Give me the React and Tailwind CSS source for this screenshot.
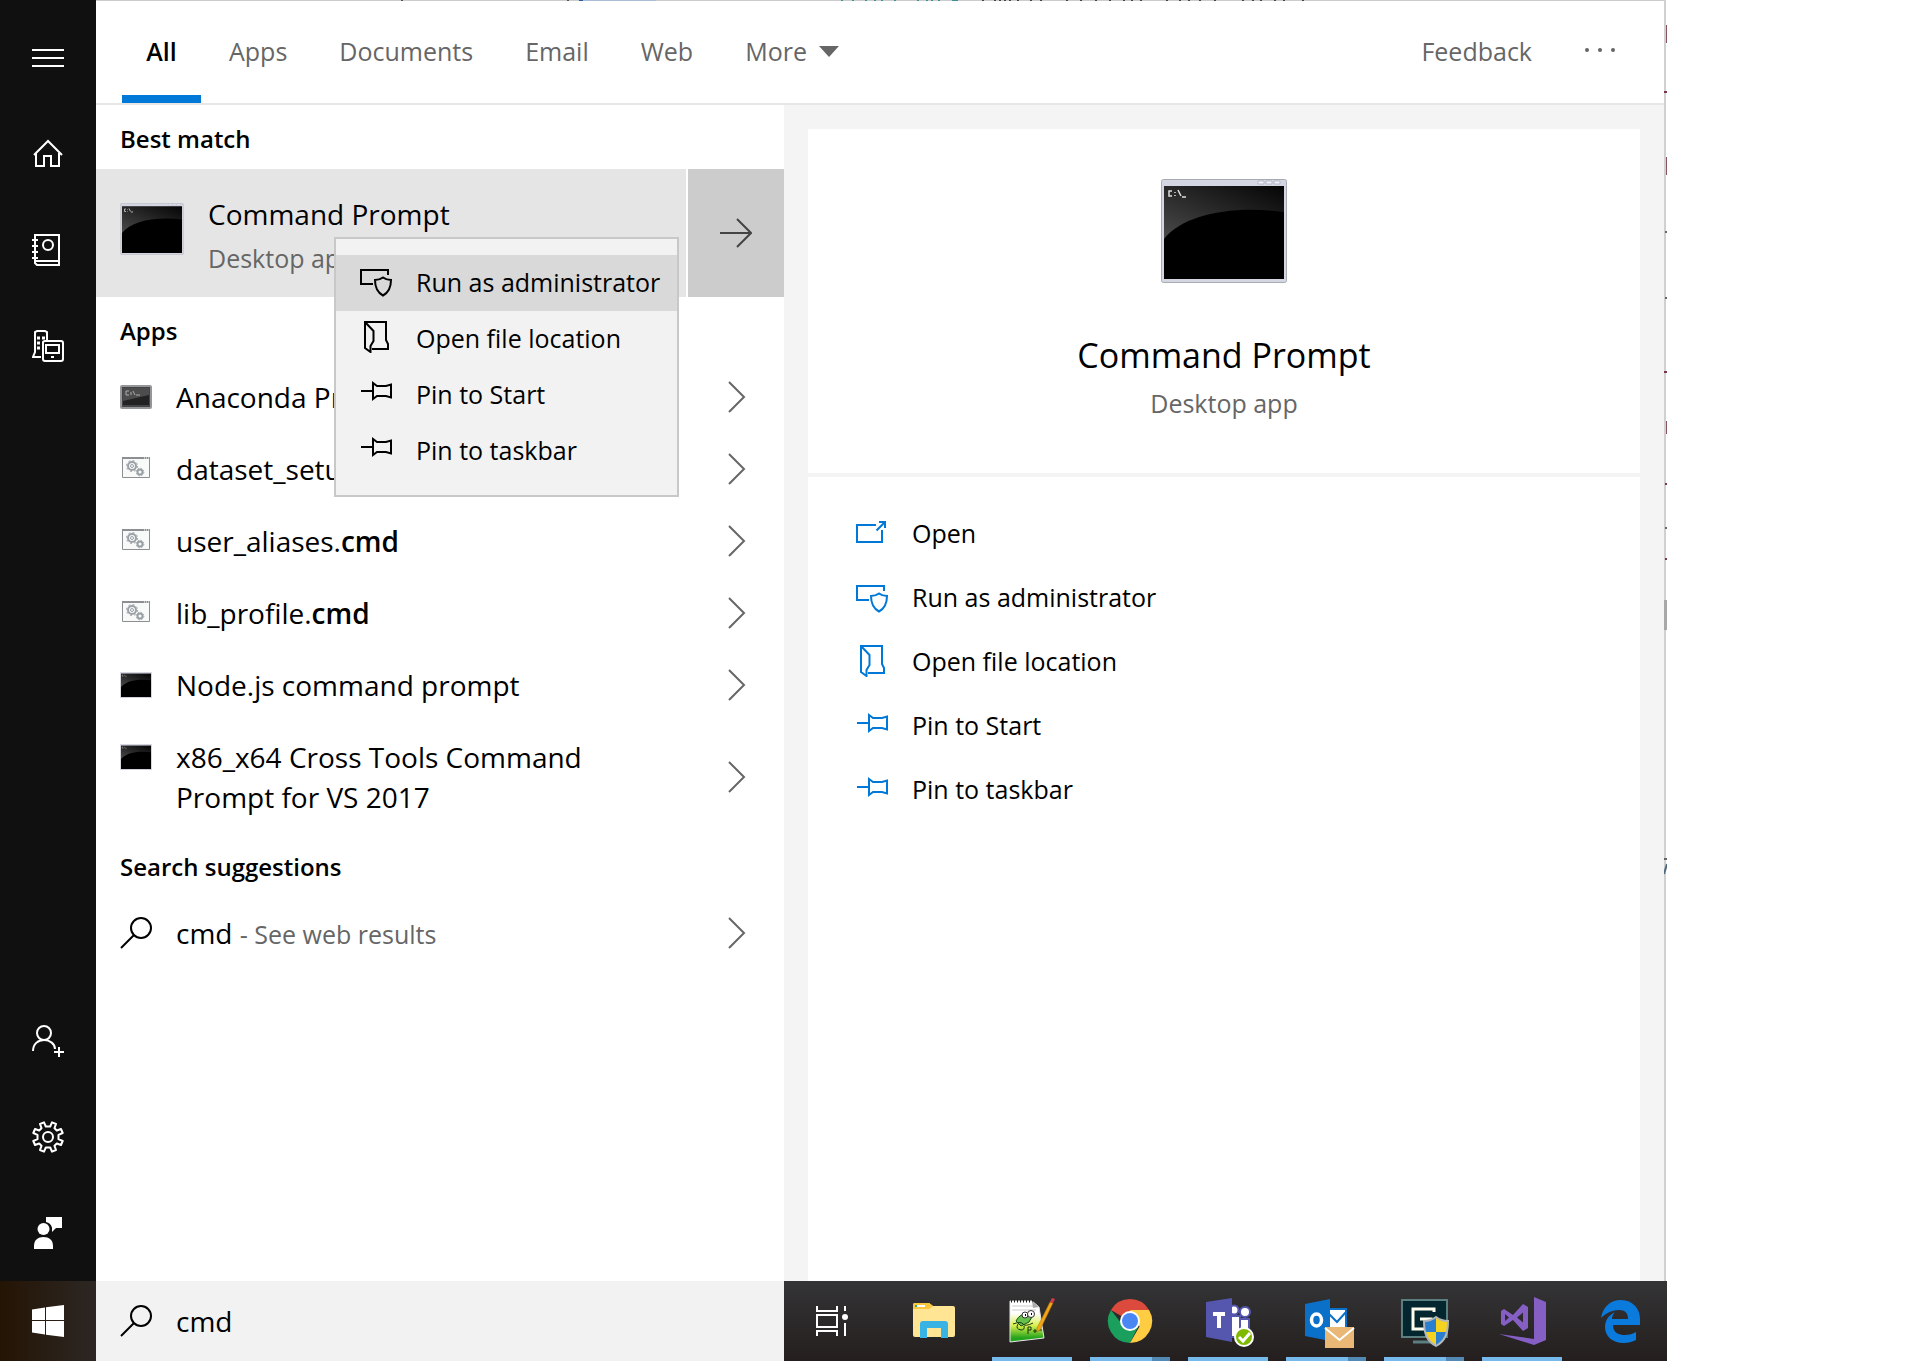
const tabs = ["All", "Apps", "Documents", "Email", "Web"];

const apps = [
  { name: "Anaconda Prompt", icon: "console" },
  { name: "dataset_setup", bold: ".cmd", icon: "script" },
  { name: "user_aliases.", bold: "cmd", icon: "script" },
  { name: "lib_profile.", bold: "cmd", icon: "script" },
  { name: "Node.js command prompt", icon: "prompt" },
  { name: "x86_x64 Cross Tools Command Prompt for VS 2017", icon: "prompt" },
];

const actions = [
  { label: "Open", icon: OpenIcon },
  { label: "Run as administrator", icon: AdminIcon },
  { label: "Open file location", icon: FolderIcon },
  { label: "Pin to Start", icon: PinIcon },
  { label: "Pin to taskbar", icon: PinIcon },
];

/* ── Line icons ── */

function LineIcon({ children, className = "" }) {
  return (
    <svg
      viewBox="0 0 32 32"
      className={`w-8 h-8 shrink-0 ${className}`}
      fill="none"
      stroke="currentColor"
      strokeWidth="2"
      aria-hidden="true"
    >
      {children}
    </svg>
  );
}

function OpenIcon(props) {
  return (
    <LineIcon {...props}>
      <path d="M20 8H1v17h25V13" />
      <path d="M20.500 13.500 29 5M23 5h6v6" />
    </LineIcon>
  );
}

function AdminIcon(props) {
  return (
    <LineIcon {...props}>
      <path d="M13 19H1V5h27v5" />
      <path d="M23 12.500c2.500 1.800 5 2.500 8 2.500 0 7-1.500 12-8 15.500C16.500 27 15 22 15 15c3 0 5.500-.7 8-2.500z" />
    </LineIcon>
  );
}

function FolderIcon(props) {
  return (
    <LineIcon {...props}>
      <path d="M5 1h21v18l2 4v5H12" />
      <path d="M5 1v26l5.500 4v-6l3-5V10z" />
    </LineIcon>
  );
}

function PinIcon(props) {
  return (
    <LineIcon {...props}>
      <path d="M1 14h12M13 6v16l4-3h9l5 1.500v-13L26 9h-9z" />
    </LineIcon>
  );
}

function SearchIcon() {
  return (
    <LineIcon>
      <circle cx="21" cy="11" r="10" />
      <path d="M14 18 1 31" />
    </LineIcon>
  );
}

function MenuIcon() {
  return (
    <LineIcon>
      <path d="M0 8h32M0 16h32M0 24h32" />
    </LineIcon>
  );
}

function HomeIcon() {
  return (
    <LineIcon>
      <path d="M2 17 16 3l14 14M4 15v13h8V18h7v10h8V15" />
    </LineIcon>
  );
}

function NotebookIcon() {
  return (
    <LineIcon>
      <path d="M3 1h24v30H5l-2-2zM3 27h24M0 6h6M0 12h6M0 18h6M0 24h6" />
      <circle cx="16" cy="11" r="5" />
    </LineIcon>
  );
}

function DevicesIcon() {
  return (
    <LineIcon>
      <path d="M9 27H1l2-5V2l2-1h8l2 1v8" />
      <path d="M5 8h3M10 8h3M5 13h3M10 13h2M5 18h3" strokeWidth="3" />
      <rect x="11" y="11" width="20" height="20" rx="2" />
      <path d="M14 15h13v8H14z" />
      <path d="M19 27h3" />
    </LineIcon>
  );
}

function AddUserIcon() {
  return (
    <LineIcon>
      <circle cx="12" cy="8" r="7" />
      <path d="M1 26c0-7 5-11 11-11s11 4 11 9M27 22v10M22 27h10" />
    </LineIcon>
  );
}

function GearIcon() {
  return (
    <LineIcon>
      <circle cx="16" cy="16" r="5" />
      <path
        strokeLinejoin="round"
        d="M13.800 5.500 12 1.300 8 3l1.500 4.200-2.300 2.300L3 8l-1.700 4 4.200 1.800v4.400L1.300 20 3 24l4.200-1.500 2.300 2.300L8 29l4 1.700 1.800-4.200h4.400l1.800 4.200 4-1.700-1.500-4.200 2.300-2.300L29 24l1.700-4-4.200-1.800v-4.400L30.700 12 29 8l-4.200 1.500-2.300-2.300L24 3l-4-1.700-1.800 4.200z"
      />
    </LineIcon>
  );
}

function FeedbackIcon() {
  return (
    <svg viewBox="0 0 32 32" className="w-8 h-8" fill="#fff" aria-hidden="true">
      <path d="M14 0h16v11h-6l-4 4v-4.500a8 8 0 0 0-6-5.500z" />
      <circle cx="11.500" cy="12" r="6" />
      <path d="M2 32v-3c0-6 4-9 9.500-9s9.500 3 9.500 9v3z" />
    </svg>
  );
}

function Chevron() {
  return (
    <svg viewBox="0 0 18 32" className="w-[18px] h-8" fill="none" stroke="#666" strokeWidth="2" aria-hidden="true">
      <path d="m1 1 15 15L1 31" />
    </svg>
  );
}

/* ── App icons ── */

function PromptIcon({ className }) {
  return (
    <svg viewBox="0 0 126 104" className={className} aria-hidden="true">
      <defs>
        <linearGradient id="gloss" x1="0" y1="1" x2="1" y2="0">
          <stop offset="0" stopColor="#4a4a4a" />
          <stop offset="1" stopColor="#050505" />
        </linearGradient>
      </defs>
      <rect x="0.500" y="0.500" width="125" height="103" rx="2" fill="#d4d6e2" stroke="#a9abb3" />
      <path d="M97 2h6v3h-6zM105 2h6v3h-6zM113 2h6v3h-6z" fill="#f3f4fa" stroke="#b4b7c6" />
      <path d="M3 7h120v93H3z" fill="#000" />
      <path d="M3 7h120v26C70 26 22 36 3 60z" fill="url(#gloss)" />
      <path
        d="M11 12H8v5h3M14 13v1M14 16v1M17 11l3 6M21 18h4"
        fill="none"
        stroke="#ddd"
        strokeWidth="1.500"
      />
    </svg>
  );
}

function ConsoleIcon() {
  return (
    <svg viewBox="0 0 32 26" className="w-8 h-[26px]" aria-hidden="true">
      <rect x="1" y="2" width="30" height="22" rx="1" fill="#444" stroke="#94979a" strokeWidth="2" />
      <path d="M3 4h26v17H3z" fill="#222" />
      <path d="M3 4h26v7L3 17z" fill="#4c4c4c" />
      <path d="M9 7H6v4h3M11 8v3M13 7l2 4M16 11h4" fill="none" stroke="#aaa" />
    </svg>
  );
}

function ScriptIcon() {
  return (
    <svg viewBox="0 2 32 26" className="w-8 h-[26px]" aria-hidden="true">
      <path d="M2.500 3.500h27v20h-27z" fill="#f8fafa" stroke="#8c8f91" />
      <path d="M2 4h28" stroke="#8c8f91" strokeWidth="2" />
      <path d="M24 4h1M26 4h1M28 4h1" stroke="#fff" />
      <g fill="none" stroke="#9ba1a5">
        <circle cx="12" cy="12" r="4" strokeWidth="2" />
        <circle cx="12" cy="12" r="5.500" strokeDasharray="2 2.300" />
        <circle cx="12" cy="12" r="1.500" />
        <circle cx="20" cy="18" r="2.500" strokeWidth="2" />
        <circle cx="20" cy="18" r="3.800" strokeDasharray="1.500 1.500" />
      </g>
    </svg>
  );
}

function AppIcon({ type }) {
  if (type === "console") return <ConsoleIcon />;
  if (type === "script") return <ScriptIcon />;
  return <PromptIcon className="w-8 h-[26px]" />;
}

/* ── Taskbar icons ── */

function TaskViewIcon() {
  return (
    <svg viewBox="0 0 48 48" className="w-12 h-12" fill="none" stroke="#fff" strokeWidth="2" aria-hidden="true">
      <path d="M5 9v5h20V9M5 18h20v12H5zM5 39v-5h20v5M33 9v5M33 26v13" />
      <circle cx="33" cy="20" r="3" fill="#fff" stroke="none" />
    </svg>
  );
}

function ExplorerIcon() {
  return (
    <svg viewBox="0 0 48 48" className="w-12 h-12" aria-hidden="true">
      <path d="M3 8q0-2 2-2h14l4 3h20q2 0 2 2v27q0 2-2 2H5q-2 0-2-2z" fill="#ffe594" />
      <path d="M3 8q0-2 2-2h14l4 3-4 3H3z" fill="#fcc63c" />
      <path d="M7 8h8v2H7z" fill="#fff" />
      <path d="M5 8h2v2H5z" fill="#2fae8e" />
      <path d="M10 41V27q0-3 3-3h22q3 0 3 3v14h-7V31H17v10z" fill="#38b3e4" />
    </svg>
  );
}

function NotepadIcon() {
  return (
    <svg viewBox="0 0 48 48" className="w-12 h-12" aria-hidden="true">
      <defs>
        <linearGradient id="paper" x1="0" y1="0" x2="0" y2="1">
          <stop offset="0.300" stopColor="#fff" />
          <stop offset="0.600" stopColor="#d8f04c" />
          <stop offset="0.900" stopColor="#24a31c" />
        </linearGradient>
      </defs>
      <path d="M2 4h22l7 6 5 31-34 4z" fill="url(#paper)" stroke="#e8e8e8" />
      <path d="M3 4h22" stroke="#222" strokeWidth="3" strokeDasharray="1 2" />
      <path d="M4 9h22M4 13h24" stroke="#ccc" />
      <path d="m24 4 1 7 6-1z" fill="#aaa" />
      <path d="M8 24q4-8 12-7l4 3-3 5-8 4z" fill="#66c04c" stroke="#1c4a14" />
      <circle cx="17" cy="18" r="3" fill="#fff" stroke="#333" />
      <circle cx="23" cy="17" r="3.500" fill="#fff" stroke="#333" />
      <path d="M17 18h1M23 17h1" stroke="#000" strokeWidth="2" />
      <path d="M5 27q8-3 10 0t10-1M10 27q-3 5 3 6 4 0 3-4M20 37v-7h3v3h-3M25 34h4M27 32v4M30 33h4" fill="none" stroke="#17370f" />
      <path d="m42 5 3 1-13 27-3 2v-4z" fill="#f2a516" stroke="#a66a10" strokeWidth="0.500" />
      <path d="m42 5 3 1 2-4-3-1z" fill="#d33a4a" />
    </svg>
  );
}

function ChromeIcon() {
  return (
    <svg viewBox="0 0 48 48" className="w-12 h-12" aria-hidden="true">
      <path d="M24 24 4.900 13a22 22 0 0 1 38.200 0z" fill="#dc4a3e" />
      <path d="M24 24H13.600L4.900 13A22 22 0 0 0 24 46l8-16z" fill="#1a9f5c" />
      <path d="M24 13h19.100A22 22 0 0 1 24 46l9.500-16.500z" fill="#ffcd42" />
      <circle cx="24" cy="24" r="10" fill="#fff" />
      <circle cx="24" cy="24" r="8" fill="#4a87f3" />
    </svg>
  );
}

function TeamsIcon() {
  return (
    <svg viewBox="0 0 48 48" className="w-12 h-12 overflow-visible" aria-hidden="true">
      <g fill="#fff" stroke="#5557ae" strokeWidth="2">
        <path d="M34 22h11v12q-2 6-9 6h-2z" />
        <path d="M26 19h10v15q0 6-5 6h-5z" />
        <circle cx="30" cy="13" r="4.500" />
        <circle cx="41" cy="15" r="5" />
      </g>
      <path d="M2 5 28 1v44L2 40z" fill="#5557ae" />
      <path d="M9 17h12M15 17v14" stroke="#fff" strokeWidth="4" />
      <circle cx="40" cy="40" r="9" fill="#7fba00" stroke="#fff" strokeWidth="2" />
      <path d="m35 40 4 4 7-8" fill="none" stroke="#fff" strokeWidth="3" />
    </svg>
  );
}

function OutlookIcon() {
  return (
    <svg viewBox="-2 -2 52 52" className="w-[52px] h-[52px] overflow-visible" aria-hidden="true">
      <path d="M26 12h18v19H26z" fill="#fff" stroke="#0a70c8" strokeWidth="2" />
      <path d="m27 17 8 8 9-10" fill="none" stroke="#0a70c8" strokeWidth="2" />
      <path d="m3 7 25-5v42L3 39z" fill="#0a70c8" />
      <ellipse cx="14.500" cy="23" rx="5" ry="6" fill="none" stroke="#fff" strokeWidth="3.500" />
      <path d="M23 30h29v21H23z" fill="#e9b877" />
      <path d="m23 31 14.500 12L52 31" fill="none" stroke="#fff" strokeWidth="2" />
    </svg>
  );
}

function ConnectIcon() {
  return (
    <svg viewBox="0 -2 50 50" className="w-[50px] h-[50px] overflow-visible" aria-hidden="true">
      <path d="M3 2h45v37H3z" fill="#03262f" stroke="#5b7f80" strokeWidth="2" />
      <path d="M14 44h22" stroke="#5b7f80" strokeWidth="3" />
      <path d="M35 14V11H14v20h18V21H21" fill="none" stroke="#fffdf0" strokeWidth="3" />
      <path d="M37 19c4 3 8 4 12 4 0 13-3 20-12 25-9-5-12-12-12-25 4 0 8-1 12-4z" fill="#f4d21f" />
      <path d="M37 19v15H26c-1-4-1-8-1-11 4 0 8-1 12-4zM37 34h11c-2 6-5 10-11 14z" fill="#2a7fd0" />
      <path
        d="M37 19c4 3 8 4 12 4 0 13-3 20-12 25-9-5-12-12-12-25 4 0 8-1 12-4z"
        fill="none"
        stroke="#b4b7ba"
        strokeWidth="2"
      />
    </svg>
  );
}

function StudioIcon() {
  return (
    <svg viewBox="0 0 48 48" className="w-12 h-12" fill="#865fc5" aria-hidden="true">
      <path d="m36 0 12 5v38l-12 5L1 37l35 5z" />
      <path fillRule="evenodd" d="M3 14 6 12l9 6L25 7l5 3v21l-5 3-10-11-9 6-3-2zM7 17v7l4-3.500zM19 20.500l6 5v-10z" />
    </svg>
  );
}

function EdgeIcon() {
  return (
    <svg viewBox="0 0 48 48" className="w-12 h-12" aria-hidden="true">
      <path
        d="M5 21C7 10 14 3 25 3c12 0 19 9 19 19v6H17c0 8 6 10 12 10 4 0 8-1 11-3v8c-4 2-8 3-12 3C16 46 9 39 9 30c0-7 4-12 10-15-2 2-3 4-3 7h16c0-6-3-9-9-9-8 0-14 4-18 8z"
        fill="#0a7bdc"
      />
    </svg>
  );
}

function WindowsIcon() {
  return (
    <svg viewBox="0 0 32 32" className="w-8 h-8" fill="#fff" aria-hidden="true">
      <path d="m0 4.500 13-2V15H0zM14 2.300 32 0v15H14zM0 16h13v13.500l-13-2zM14 16h18v16l-18-2.300z" />
    </svg>
  );
}

const taskbar = [
  { name: "Task View", icon: TaskViewIcon },
  { name: "File Explorer", icon: ExplorerIcon },
  { name: "Notepad++", icon: NotepadIcon, open: "one" },
  { name: "Chrome", icon: ChromeIcon, open: "many" },
  { name: "Teams", icon: TeamsIcon, open: "one" },
  { name: "Outlook", icon: OutlookIcon, open: "many" },
  { name: "Remote Console", icon: ConnectIcon, open: "many" },
  { name: "Visual Studio", icon: StudioIcon, open: "one" },
  { name: "Edge", icon: EdgeIcon },
];

/* ── Slivers of the window behind, seen along the top and right edges ── */

function BackdropTop() {
  return (
    <svg className="absolute top-0 left-0 w-full h-px" aria-hidden="true">
      <path d="M401 .5h2M567 .5h2" stroke="#555" />
      <path d="M579 .5h4" stroke="#2d5c94" />
      <path d="M583 .5h73" stroke="#a9bdd6" />
      <path
        d="M841 .5h2M852 .5h2M865 .5h2M874 .5h2M881 .5h2M894 .5h2M917 .5h2M926 .5h2M931 .5h2M938 .5h2M952 .5h6"
        stroke="#3f8f96"
      />
      <path
        d="M982 .5h2M994 .5h2M999 .5h2M1004 .5h2M1009 .5h2M1017 .5h2M1030 .5h2M1040 .5h2M1066 .5h2M1080 .5h2M1095 .5h2M1109 .5h2M1123 .5h2M1131 .5h2M1140 .5h2M1166 .5h2M1179 .5h2M1188 .5h2M1199 .5h2M1214 .5h2M1242 .5h2M1252 .5h2M1260 .5h2M1274 .5h2M1283 .5h2M1302 .5h2"
        stroke="#444"
      />
    </svg>
  );
}

function BackdropRight() {
  return (
    <svg className="absolute top-0 right-0 w-[3px] h-[930px]" aria-hidden="true">
      <path d="M2.500 25v18M2.500 157v18M2.500 421v13" stroke="#8a5560" />
      <path d="M0 92h3M0 372h3M1 484h2M1 559h2" stroke="#7a3548" strokeWidth="2" />
      <path d="M1 232h2M1 298h2M1 528h2M0 859h3" stroke="#666" strokeWidth="2" />
      <path d="M1.500 600v30" stroke="#a8a8a8" strokeWidth="3" />
      <path d="m0 874 3-10" stroke="#4d6a80" strokeWidth="2" />
    </svg>
  );
}

/* ── Sections ── */

function RailButton({ label, children }) {
  return (
    <button aria-label={label} className="w-24 h-24 flex items-center justify-center text-white">
      {children}
    </button>
  );
}

function Rail() {
  return (
    <nav className="w-24 shrink-0 flex flex-col justify-between bg-[#101010] pt-2.5">
      <div>
        <RailButton label="Menu"><MenuIcon /></RailButton>
        <RailButton label="Home"><HomeIcon /></RailButton>
        <RailButton label="Notebook"><NotebookIcon /></RailButton>
        <RailButton label="Devices"><DevicesIcon /></RailButton>
      </div>
      <div>
        <RailButton label="Add account"><AddUserIcon /></RailButton>
        <RailButton label="Settings"><GearIcon /></RailButton>
        <RailButton label="Feedback"><FeedbackIcon /></RailButton>
      </div>
    </nav>
  );
}

function Header() {
  return (
    <header className="h-[105px] flex border-t border-t-[#ccc] border-b-2 border-b-[#e6e6e6] pl-[26px] pr-12 text-[25px] text-[#666]">
      {tabs.map((tab, i) => (
        <button
          key={tab}
          className={
            i === 0
              ? "w-[79px] mr-0.5 border-b-8 border-[#0078d7] pt-2 font-semibold text-black"
              : "px-[26px]"
          }
        >
          {tab}
        </button>
      ))}
      <button className="px-[26px] flex items-center gap-3">
        More
        <svg viewBox="0 0 20 12" className="w-5 h-3" fill="#666" aria-hidden="true">
          <path d="M0 0h20L10 11z" />
        </svg>
      </button>
      <div className="ml-auto flex items-center gap-[52px]">
        <button>Feedback</button>
        <button aria-label="Options" className="pb-1">
          <svg viewBox="0 0 32 6" className="w-8 h-1.5" fill="#666" aria-hidden="true">
            <circle cx="3" cy="3" r="2" />
            <circle cx="16" cy="3" r="2" />
            <circle cx="29" cy="3" r="2" />
          </svg>
        </button>
      </div>
    </header>
  );
}

function SectionTitle({ children }) {
  return <h2 className="h-16 flex items-center pl-6 pt-1 text-2xl font-semibold">{children}</h2>;
}

function ContextMenu() {
  return (
    <div className="absolute left-[238px] top-[68px] z-10 w-[345px] border-2 border-[#c8c8c8] bg-[#f2f2f2] py-4">
      {actions.slice(1).map(({ label, icon: Icon }, i) => (
        <button
          key={label}
          className={`w-full h-14 flex items-center gap-6 pl-6 text-[25px] ${i === 0 ? "bg-[#d9d9d9]" : ""}`}
        >
          <Icon className="mb-1" />
          {label}
        </button>
      ))}
    </div>
  );
}

function Results() {
  return (
    <section className="w-[688px] shrink-0 bg-white">
      <SectionTitle>Best match</SectionTitle>
      <div className="relative h-32 flex gap-0.5">
        <button className="flex-1 flex items-center gap-6 bg-[#e5e5e5] pl-6 text-left">
          <PromptIcon className="w-16 h-[52px] mb-2" />
          <span className="pt-1.5">
            <span className="block text-[28px] leading-11">Command Prompt</span>
            <span className="block text-[25px] leading-11 text-[#666]">Desktop app</span>
          </span>
        </button>
        <button aria-label="Show details" className="w-24 flex items-center justify-center bg-[#ccc]">
          <svg viewBox="0 0 32 32" className="w-8 h-8" fill="none" stroke="#444" strokeWidth="2" aria-hidden="true">
            <path d="M0 16h31M17 2l14 14-14 14" />
          </svg>
        </button>
        <ContextMenu />
      </div>

      <SectionTitle>Apps</SectionTitle>
      {apps.map((app) => (
        <button key={app.name} className="w-full flex items-center justify-between pl-6 pr-[38px] text-left">
          <span className="flex gap-6 py-4">
            <span className="h-10 flex items-center">
              <AppIcon type={app.icon} />
            </span>
            <span className="w-[440px] text-[28px] leading-10">
              {app.name}
              {app.bold && <b className="font-semibold">{app.bold}</b>}
            </span>
          </span>
          <Chevron />
        </button>
      ))}

      <SectionTitle>Search suggestions</SectionTitle>
      <button className="w-full h-18 flex items-center gap-6 pl-6 pr-[38px] text-left">
        <SearchIcon />
        <span className="flex-1 text-[28px]">
          cmd <span className="text-[25px] text-[#666]">- See web results</span>
        </span>
        <Chevron />
      </button>
    </section>
  );
}

function Details() {
  return (
    <section className="flex-1 flex flex-col gap-1 bg-[#f4f4f4] px-6 pt-6">
      <div className="h-[344px] flex flex-col items-center bg-white pt-[50px]">
        <PromptIcon className="w-[126px] h-[104px]" />
        <h1 className="mt-12 text-[34px] leading-12">Command Prompt</h1>
        <p className="text-[25px] leading-12 text-[#666]">Desktop app</p>
      </div>
      <div className="flex-1 bg-white pt-[25px]">
        {actions.map(({ label, icon: Icon }) => (
          <button key={label} className="w-full h-16 flex items-center gap-6 pl-12 text-[25px]">
            <Icon className="mb-0.5 text-[#0078d7]" />
            {label}
          </button>
        ))}
      </div>
    </section>
  );
}

function Taskbar() {
  return (
    <footer className="h-20 shrink-0 flex">
      <button aria-label="Start" className="w-24 shrink-0 flex items-center justify-center bg-linear-to-r from-[#241404] to-[#2c2724]">
        <WindowsIcon />
      </button>
      <label className="w-[688px] shrink-0 flex items-center gap-6 bg-[#f2f2f2] pl-6">
        <SearchIcon />
        <input
          type="text"
          aria-label="Search"
          defaultValue="cmd"
          className="flex-1 bg-transparent text-[28px] outline-none"
        />
      </label>
      <div className="flex-1 flex gap-4.5 bg-linear-to-b from-[#343436] to-[#241f1e] pl-3">
        {taskbar.map(({ name, icon: Icon, open }) => (
          <button key={name} aria-label={name} className="w-20 shrink-0 flex flex-col items-center">
            <span className="flex-1 flex items-center pt-1">
              <Icon />
            </span>
            <span className="w-20 h-1 flex">
              {open && <span className="flex-1 bg-[#76b9ed]" />}
              {open === "many" && <span className="w-4.5 bg-[#5288b4]" />}
            </span>
          </button>
        ))}
      </div>
    </footer>
  );
}

export default function App() {
  return (
    <div className="min-h-screen flex bg-white pr-61 font-['Open_Sans','Noto_Sans',sans-serif] text-black">
      <div className="relative flex-1 flex flex-col">
        <div className="flex-1 flex">
          <Rail />
          <main className="flex-1 flex flex-col mr-px border-r-2 border-[#d0d0d0]">
            <Header />
            <div className="flex-1 flex">
              <Results />
              <Details />
            </div>
          </main>
        </div>
        <Taskbar />
        <BackdropTop />
        <BackdropRight />
      </div>
    </div>
  );
}
